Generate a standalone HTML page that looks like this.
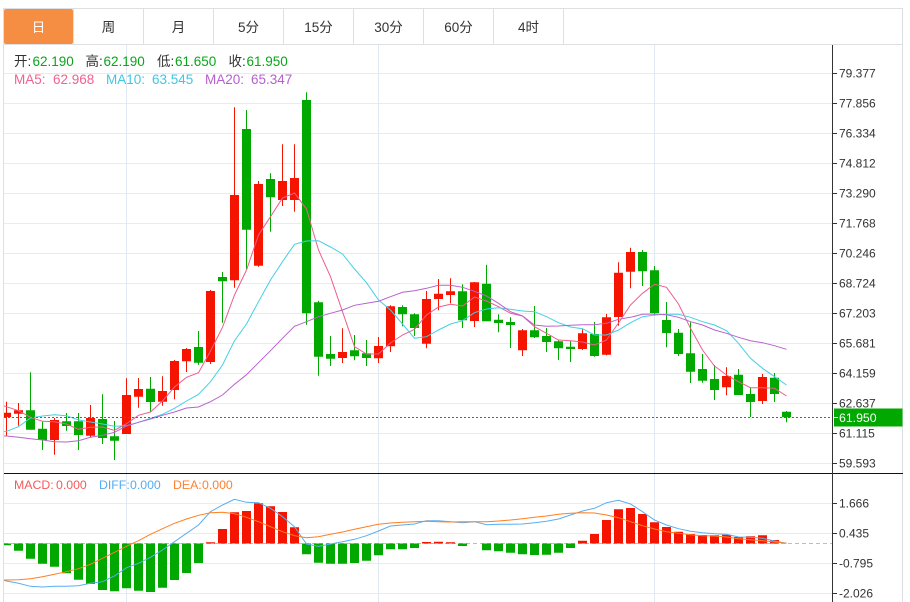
<!DOCTYPE html>
<html lang="zh">
<head>
<meta charset="utf-8">
<title>K线图</title>
<style>
html,body{margin:0;padding:0;background:#fff;width:910px;height:602px;overflow:hidden}
svg{position:absolute;left:0;top:0;display:block}
text{font-family:"Liberation Sans","Noto Sans CJK SC",sans-serif}
</style>
</head>
<body>
<svg width="910" height="602" viewBox="0 0 910 602" xmlns="http://www.w3.org/2000/svg">
<defs><clipPath id="c"><rect x="4" y="45" width="828" height="557"/></clipPath></defs>

<!-- frame -->
<path d="M3.5 8V602M902.5 8V602M3 8.5H903M3 44.5H903" stroke="#dde0e3" fill="none"/>
<path d="M73.5 9V44M143.5 9V44M213.5 9V44M283.5 9V44M353.5 9V44M423.5 9V44M493.5 9V44M563.5 9V44" stroke="#dde0e3" fill="none"/>
<rect x="4" y="9" width="69" height="35" rx="2" fill="#f58d42"/>
<g font-size="13.5" text-anchor="middle" fill="#333">
<text x="38.5" y="32" fill="#fff">日</text>
<text x="108.5" y="32">周</text>
<text x="178.5" y="32">月</text>
<text x="248.5" y="32">5分</text>
<text x="318.5" y="32">15分</text>
<text x="388.5" y="32">30分</text>
<text x="458.5" y="32">60分</text>
<text x="528.5" y="32">4时</text>
</g>

<!-- grid -->
<path d="M4 73.5H832M4 103.5H832M4 133.5H832M4 163.5H832M4 193.5H832M4 223.5H832M4 253.5H832M4 283.5H832M4 313.5H832M4 343.5H832M4 373.5H832M4 403.5H832M4 433.5H832M4 463.5H832M4 503.5H832M4 533.5H832M4 563.5H832M4 593.5H832" stroke="#e6ecf2" fill="none"/>
<path d="M126.5 45V602M378.5 45V602M654.5 45V602" stroke="#e0e9f1" fill="none"/>

<g clip-path="url(#c)">
<!-- red wicks -->
<path stroke="#f51400" fill="none" d="M6.5 401.7V435.7M18.5 403V425.7M54.5 418V454.7M90.5 405V437.7M126.5 378.3V434M138.5 378V407.7M162.5 376.3V405.7M174.5 360V399.3M186.5 348V372M210.5 290V364M234.5 107.3V287.7M258.5 181V266.7M282.5 144.3V206M294.5 144.3V211.7M342.5 328.3V363M378.5 337V363M390.5 305.3V352M426.5 291V348.3M438.5 279V310.3M450.5 278.3V303.3M474.5 282V327M522.5 329V356M582.5 329.3V350M606.5 314V355.3M618.5 262.3V325.7M630.5 247.7V288.3M726.5 367.3V395.3M762.5 374V404"/>
<!-- green wicks -->
<path stroke="#00a800" fill="none" d="M30.5 372.3V429.7M42.5 421.7V450M66.5 413V430.7M78.5 413V450M102.5 394.3V444M114.5 421V460M150.5 377V411.7M198.5 331V364.7M222.5 272V322.7M246.5 110V269M270.5 173.3V231.7M306.5 92.3V324.7M318.5 300.7V375.7M330.5 336V366M354.5 335V360.3M366.5 340V366M402.5 305.3V326.3M414.5 313.3V336M462.5 284.3V328M486.5 264.7V321.3M498.5 314.3V332.3M510.5 317.3V348M534.5 306V338M546.5 328V352M558.5 339.7V360M570.5 341V362M594.5 322V356.7M642.5 250V286M654.5 266V315.7M666.5 302V347.3M678.5 329V356M690.5 322.3V383M702.5 354V382.7M714.5 365V400M738.5 369V395M750.5 388V417M774.5 373V402M786.5 411V422.3"/>
<!-- red bodies -->
<path stroke="#f51400" stroke-width="9" fill="none" d="M6.5 412.7V417M18.5 410.3V413.7M54.5 420V440M90.5 418V435.7M126.5 395V434M138.5 389V396.7M162.5 391V401.7M174.5 361V390M186.5 349V361.3M210.5 291V362M234.5 195V280.3M258.5 184V265.7M282.5 181V200M294.5 178V200M342.5 352V358M378.5 346V358.3M390.5 306.3V346.3M426.5 299V343.7M438.5 293.7V299M450.5 291.3V295M474.5 282.3V321M522.5 330.3V350.3M582.5 333.3V349M606.5 317.3V354.7M618.5 272.7V317M630.5 252V271.7M726.5 376V387.3M762.5 377V401"/>
<!-- green bodies -->
<path stroke="#00a800" stroke-width="9" fill="none" d="M30.5 410.3V429.7M42.5 428.7V440M66.5 421.3V426M78.5 421.3V435M102.5 419V438M114.5 436.3V440.7M150.5 388.7V402M198.5 347V362.7M222.5 277V281.3M246.5 129V229.7M270.5 179V197.3M306.5 100V313.3M318.5 302.3V356.7M330.5 354V358.7M354.5 350.3V356.3M366.5 353.3V358M402.5 307V314.3M414.5 314.3V328M462.5 291.3V320.3M486.5 283.7V321.3M498.5 319.7V323M510.5 322V325M534.5 330.3V337.3M546.5 336V342M558.5 341.3V348.3M570.5 346.7V349M594.5 334V356M642.5 252V271.3M654.5 270.3V313M666.5 320V333M678.5 332.7V354M690.5 353.3V371.7M702.5 369V380.7M714.5 379V390M738.5 374.7V395M750.5 394V402M774.5 377.7V394M786.5 411.7V417.3"/>

<!-- MA lines -->
<polyline fill="none" stroke="#ec5f8e" stroke-width="1" points="-5,403 6.5,406.7 18.5,410.7 30.5,417.3 42.5,421.3 54.5,421.7 66.5,424 78.5,429.3 90.5,427.3 102.5,427 114.5,430.3 126.5,423.7 138.5,415.3 150.5,412 162.5,401 174.5,387 186.5,377.3 198.5,372.7 210.5,351 222.5,327.3 234.5,295 246.5,270 258.5,235 270.5,216.7 282.5,198 294.5,193 306.5,209 318.5,250 330.5,276.7 342.5,311.7 354.5,346.7 366.5,354 378.5,354 390.5,343 402.5,335 414.5,329.3 426.5,315 438.5,307 450.5,304.3 462.5,306 474.5,297 486.5,301 498.5,306.7 510.5,313.3 522.5,316 534.5,326.7 546.5,333.3 558.5,340 570.5,340.7 582.5,342 594.5,345 606.5,340 618.5,323 630.5,305 642.5,293.3 654.5,284.3 666.5,287.3 678.5,304 690.5,328.3 702.5,350 714.5,366 726.5,375 738.5,381.7 750.5,387.7 762.5,387.7 774.5,388.3 786.5,396"/>
<polyline fill="none" stroke="#45cfe4" stroke-width="1" points="-5,433 6.5,431.3 18.5,426.7 30.5,418 42.5,416 54.5,414.7 66.5,415.7 78.5,420 90.5,422 102.5,424 114.5,426.3 126.5,425.7 138.5,422.3 150.5,418.3 162.5,414.3 174.5,408.3 186.5,401 198.5,394.3 210.5,381.7 222.5,365 234.5,340.7 246.5,324 258.5,301.7 270.5,280 282.5,261.7 294.5,244.3 306.5,241 318.5,240.7 330.5,247 342.5,254 354.5,269 366.5,282.7 378.5,300 390.5,310 402.5,324 414.5,338.3 426.5,336.7 438.5,330 450.5,324 462.5,320.7 474.5,312.7 486.5,309 498.5,307.7 510.5,309.3 522.5,311 534.5,311.7 546.5,316.7 558.5,322.7 570.5,327 582.5,328.7 594.5,335 606.5,335 618.5,330 630.5,322.7 642.5,316.7 654.5,315 666.5,314.3 678.5,314.3 690.5,317.3 702.5,321.7 714.5,325 726.5,330.7 738.5,343.3 750.5,358.3 762.5,368.3 774.5,376.7 786.5,385"/>
<polyline fill="none" stroke="#b863cf" stroke-width="1" points="-5,435.5 6.5,436 18.5,437.3 30.5,438.7 42.5,440 54.5,441.7 66.5,442 78.5,440.7 90.5,437.3 102.5,435.3 114.5,432.3 126.5,426 138.5,422.3 150.5,419 162.5,415.3 174.5,412 186.5,408 198.5,407 210.5,401.7 222.5,395 234.5,384.3 246.5,374.7 258.5,362.7 270.5,350.7 282.5,338.3 294.5,326.3 306.5,321.7 318.5,316.7 330.5,313.3 342.5,310 354.5,305.3 366.5,303.3 378.5,301.3 390.5,296.7 402.5,292.3 414.5,290.7 426.5,288.3 438.5,285.3 450.5,285.3 462.5,287.3 474.5,291.3 486.5,296 498.5,303.3 510.5,311.7 522.5,316 534.5,325 546.5,326.3 558.5,326 570.5,325.3 582.5,324.7 594.5,324.7 606.5,323.3 618.5,319.3 630.5,317.3 642.5,314.3 654.5,314 666.5,314.7 678.5,317.3 690.5,321.7 702.5,325 714.5,330 726.5,333.3 738.5,337.3 750.5,340.7 762.5,342.7 774.5,345.7 786.5,349.3"/>

<!-- price line -->
<path d="M4 417.5H832" stroke="#00a800" stroke-dasharray="2 2" fill="none"/>

<!-- MACD zero -->
<path d="M4 543.5H832" stroke="#8fcde6" stroke-dasharray="4 3" fill="none"/>

<!-- MACD bars -->
<path stroke="#00a800" stroke-width="9" fill="none" d="M6.5 543.5V545.3M18.5 543.5V550.7M30.5 543.5V558.7M42.5 543.5V563.7M54.5 543.5V566.7M66.5 543.5V573.3M78.5 543.5V579.7M90.5 543.5V584M102.5 543.5V590M114.5 543.5V591.3M126.5 543.5V588.3M138.5 543.5V590.7M150.5 543.5V592M162.5 543.5V587.7M174.5 543.5V580M186.5 543.5V573M198.5 543.5V563M306.5 543.5V554.3M318.5 543.5V562.7M330.5 543.5V563.7M342.5 543.5V563.7M354.5 543.5V563M366.5 543.5V560.7M378.5 543.5V555.3M390.5 543.5V549.3M402.5 543.5V549.3M414.5 543.5V548M462.5 543.5V546M486.5 543.5V550.3M498.5 543.5V551.3M510.5 543.5V552.7M522.5 543.5V554.3M534.5 543.5V555M546.5 543.5V554.7M558.5 543.5V552.7M570.5 543.5V548"/>
<path stroke="#f51400" stroke-width="9" fill="none" d="M210.5 543.5V542.3M222.5 543.5V529M234.5 543.5V512.3M246.5 543.5V511M258.5 543.5V503.3M270.5 543.5V506.3M282.5 543.5V512M294.5 543.5V527.3M426.5 543.5V542M438.5 543.5V541.7M450.5 543.5V542.3M582.5 543.5V540.7M594.5 543.5V534M606.5 543.5V520M618.5 543.5V509.3M630.5 543.5V508M642.5 543.5V514M654.5 543.5V522.3M666.5 543.5V527M678.5 543.5V531.7M690.5 543.5V534M702.5 543.5V535M714.5 543.5V535.3M726.5 543.5V534.7M738.5 543.5V537M750.5 543.5V536.3M762.5 543.5V535.3M774.5 543.5V540"/>

<!-- DIFF / DEA -->
<polyline fill="none" stroke="#5aaef0" stroke-width="1" points="-5,578 6.5,581 18.5,583.3 30.5,586.3 42.5,587 54.5,586.3 66.5,586.3 78.5,585.7 90.5,583.3 102.5,581.7 114.5,576 126.5,567.7 138.5,563.3 150.5,557.3 162.5,550 174.5,541.7 186.5,533.3 198.5,525 210.5,511.7 222.5,505 234.5,499.3 246.5,502.3 258.5,502.7 270.5,508.3 282.5,516.7 294.5,526.7 306.5,544 318.5,546.4 330.5,544 342.5,541.7 354.5,539.3 366.5,535.7 378.5,531 390.5,526 402.5,525 414.5,524 426.5,520.7 438.5,520.7 450.5,521.7 462.5,522.7 474.5,521.7 486.5,524.7 498.5,524.3 510.5,524.3 522.5,524 534.5,522.7 546.5,521.3 558.5,519 570.5,515 582.5,511 594.5,508.3 606.5,502.7 618.5,500.3 630.5,504 642.5,511.7 654.5,520 666.5,525 678.5,528.7 690.5,531.3 702.5,532.7 714.5,533.7 726.5,534.3 738.5,537 750.5,537.3 762.5,538.3 774.5,541 786.5,543.3"/>
<polyline fill="none" stroke="#ff7f20" stroke-width="1" points="-5,580.2 6.5,580 18.5,579.7 30.5,578.7 42.5,576.7 54.5,574.3 66.5,571.7 78.5,568.7 90.5,564.3 102.5,558.3 114.5,552.3 126.5,546.3 138.5,540.7 150.5,534.3 162.5,528.7 174.5,523.3 186.5,519 198.5,515.3 210.5,512.7 222.5,512.3 234.5,513.7 246.5,517.3 258.5,521.7 270.5,526.7 282.5,531.7 294.5,535.7 306.5,537.7 318.5,536.7 330.5,534.3 342.5,532 354.5,529.3 366.5,526.7 378.5,524.3 390.5,523 402.5,522.3 414.5,521.7 426.5,521.3 438.5,521.7 450.5,522 462.5,521.7 474.5,521.7 486.5,521.7 498.5,521 510.5,520 522.5,518.7 534.5,517.3 546.5,516 558.5,514.3 570.5,513.3 582.5,512.7 594.5,513 606.5,515 618.5,517.7 630.5,521.7 642.5,525.7 654.5,529 666.5,531.7 678.5,533.3 690.5,534.7 702.5,535.7 714.5,536 726.5,537 738.5,538.7 750.5,539.7 762.5,540.7 774.5,542 786.5,543.3"/>
</g>

<!-- divider & axis -->
<path d="M4 473.5H903" stroke="#111" fill="none"/>
<path d="M832.5 45V602" stroke="#333" fill="none"/>
<path d="M833 73.5H837M833 103.5H837M833 133.5H837M833 163.5H837M833 193.5H837M833 223.5H837M833 253.5H837M833 283.5H837M833 313.5H837M833 343.5H837M833 373.5H837M833 403.5H837M833 433.5H837M833 463.5H837M833 503.5H837M833 533.5H837M833 563.5H837M833 593.5H837" stroke="#333" fill="none"/>

<g font-size="12" fill="#333">
<text x="839" y="77.5">79.377</text>
<text x="839" y="107.5">77.856</text>
<text x="839" y="137.5">76.334</text>
<text x="839" y="167.5">74.812</text>
<text x="839" y="197.5">73.290</text>
<text x="839" y="227.5">71.768</text>
<text x="839" y="257.5">70.246</text>
<text x="839" y="287.5">68.724</text>
<text x="839" y="317.5">67.203</text>
<text x="839" y="347.5">65.681</text>
<text x="839" y="377.5">64.159</text>
<text x="839" y="407.5">62.637</text>
<text x="839" y="437.5">61.115</text>
<text x="839" y="467.5">59.593</text>
<text x="839" y="507.5">1.666</text>
<text x="839" y="537.5">0.435</text>
<text x="839" y="567.5">-0.795</text>
<text x="839" y="597.5">-2.026</text>
</g>

<rect x="834" y="408.5" width="68.5" height="18" fill="#00a800"/>
<path d="M834 417.5H838" stroke="#fff" fill="none"/>
<text x="839" y="422" font-size="12.3" fill="#fff">61.950</text>

<!-- legends -->
<g font-size="13.5">
<text x="14" y="66" fill="#333">开:</text><text x="32.5" y="66" fill="#0aa51a">62.190</text>
<text x="85.5" y="66" fill="#333">高:</text><text x="103.5" y="66" fill="#0aa51a">62.190</text>
<text x="157" y="66" fill="#333">低:</text><text x="175" y="66" fill="#0aa51a">61.650</text>
<text x="228.5" y="66" fill="#333">收:</text><text x="246.5" y="66" fill="#0aa51a">61.950</text>
<text x="14" y="84" fill="#f0628f">MA5:</text><text x="53" y="84" fill="#f0628f">62.968</text>
<text x="106" y="84" fill="#3ec8e2">MA10:</text><text x="152" y="84" fill="#3ec8e2">63.545</text>
<text x="205" y="84" fill="#b660cf">MA20:</text><text x="251" y="84" fill="#b660cf">65.347</text>
</g>
<g font-size="12.3">
<text x="14" y="489" fill="#f55a5a">MACD:</text><text x="56" y="489" fill="#f55a5a">0.000</text>
<text x="99" y="489" fill="#56abf0">DIFF:</text><text x="130" y="489" fill="#56abf0">0.000</text>
<text x="173" y="489" fill="#ff8030">DEA:</text><text x="202" y="489" fill="#ff8030">0.000</text>
</g>
</svg>
</body>
</html>
